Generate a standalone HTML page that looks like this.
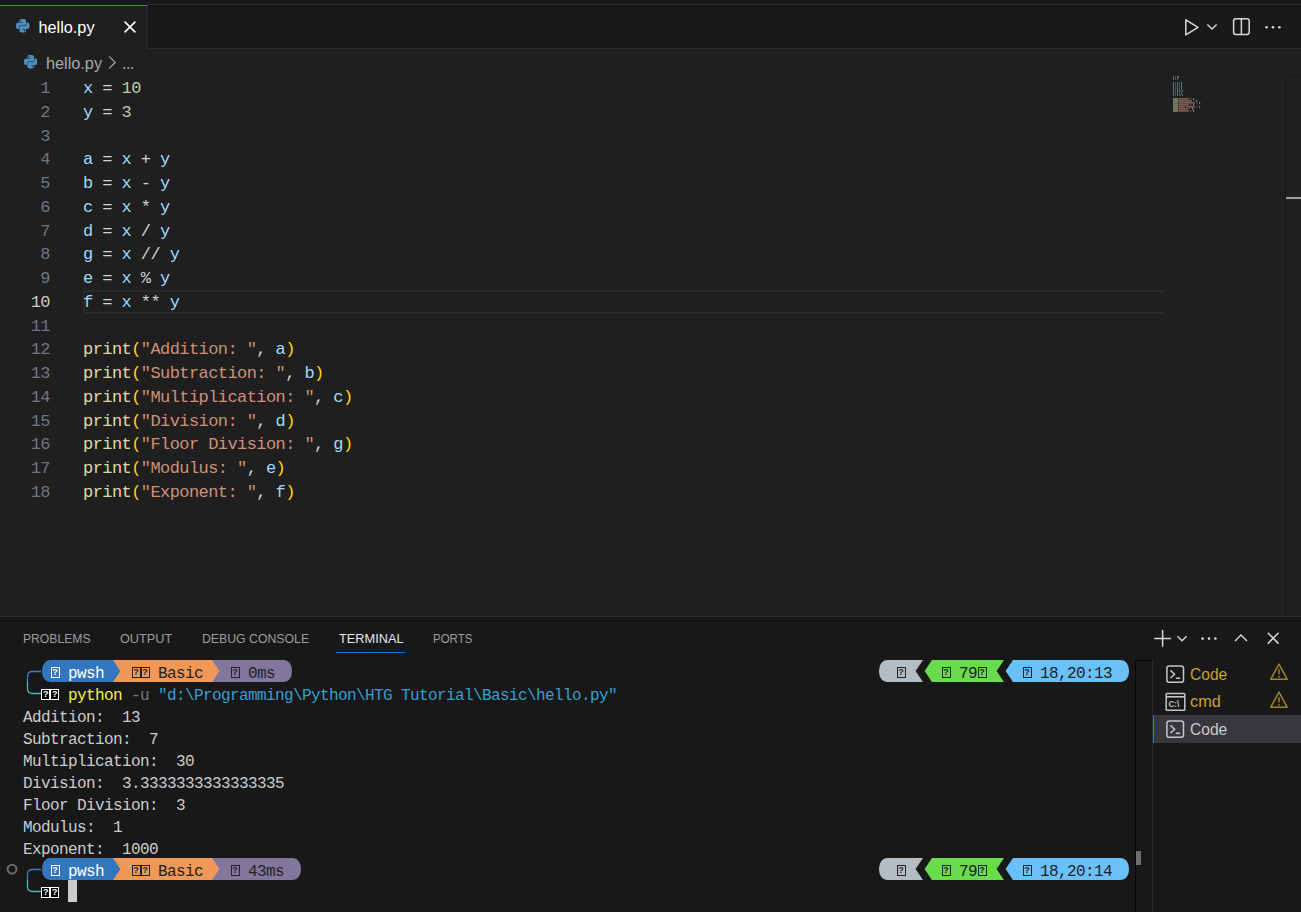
<!DOCTYPE html>
<html lang="en"><head><meta charset="utf-8"><title>hello.py</title><style>
*{box-sizing:border-box}
html,body{margin:0;padding:0}
body{width:1301px;height:912px;overflow:hidden;background:#1f1f1f;position:relative;font-family:"Liberation Sans",sans-serif;color:#ccc}
.abs{position:absolute}
.ui{position:absolute;white-space:pre;font-family:"Liberation Sans",sans-serif;transform-origin:0 50%}
.code{position:absolute;left:83px;white-space:pre;font-family:"Liberation Mono",monospace;font-size:17px;letter-spacing:-0.5765px;line-height:23.75px;height:23.75px;color:#d4d4d4;margin-top:1.2px}
.ln{position:absolute;left:0;width:49.9px;text-align:right;white-space:pre;font-family:"Liberation Mono",monospace;font-size:17px;letter-spacing:-0.5765px;line-height:23.75px;height:23.75px;color:#6e7681;margin-top:1.2px}
.v{color:#9cdcfe}.n{color:#b5cea8}.f{color:#dcdcaa}.p{color:#ffd700}.s{color:#ce9178}
.t{position:absolute;white-space:pre;font-family:"Liberation Mono",monospace;font-size:16px;letter-spacing:-0.6014px;line-height:22px;height:22px;color:#ccc;margin-top:2.6px}
.tf{position:absolute;width:9.2px;height:11.2px;border:1px solid currentColor;font-family:"Liberation Sans",sans-serif;font-size:9px;line-height:9.5px;text-align:center;font-weight:bold}
</style></head><body>
<div class="abs" style="left:0;top:0;width:1301px;height:49px;background:#181818"></div>
<div class="abs" style="left:147px;top:4px;width:1154px;height:1px;background:#2b2b2b"></div>
<div class="abs" style="left:0;top:48px;width:1301px;height:1px;background:#2b2b2b"></div>
<div class="abs" style="left:0;top:5px;width:148px;height:44px;background:#1f1f1f;border-right:1px solid #2b2b2b"></div>
<div class="abs" style="left:0;top:5px;width:147px;height:1px;background:#367dd4"></div>
<svg class="abs" style="left:16px;top:19px" width="13.5" height="13.5" viewBox="0 0 24 24"><path fill="#4f8fbb" d="M14.25.18l.9.2.73.26.59.3.45.32.34.34.25.34.16.33.1.3.04.26.02.2-.01.13V8.5l-.05.63-.13.55-.21.46-.26.38-.3.31-.33.25-.35.19-.35.14-.33.1-.3.07-.26.04-.21.02H8.77l-.69.05-.59.14-.5.22-.41.27-.33.32-.27.35-.2.36-.15.37-.1.35-.07.32-.04.27-.02.21v3.06H3.17l-.21-.03-.28-.07-.32-.12-.35-.18-.36-.26-.36-.36-.35-.46-.32-.59-.28-.73-.21-.88-.14-1.05-.05-1.23.06-1.22.16-1.04.24-.87.32-.71.36-.57.4-.44.42-.33.42-.24.4-.16.36-.1.32-.05.24-.01h.16l.06.01h8.16v-.83H6.18l-.01-2.75-.02-.37.05-.34.11-.31.17-.28.25-.26.31-.23.38-.2.44-.18.51-.15.58-.12.64-.1.71-.06.77-.04.84-.02 1.27.05zm-6.3 1.98l-.23.33-.08.41.08.41.23.34.33.22.41.09.41-.09.33-.22.23-.34.08-.41-.08-.41-.23-.33-.33-.22-.41-.09-.41.09zm13.09 3.95l.28.06.32.12.35.18.36.27.36.35.35.47.32.59.28.73.21.88.14 1.04.05 1.23-.06 1.23-.16 1.04-.24.86-.32.71-.36.57-.4.45-.42.33-.42.24-.4.16-.36.09-.32.05-.24.02-.16-.01h-8.22v.82h5.84l.01 2.76.02.36-.05.34-.11.31-.17.29-.25.25-.31.24-.38.2-.44.17-.51.15-.58.13-.64.09-.71.07-.77.04-.84.01-1.27-.04-1.07-.14-.9-.2-.73-.25-.59-.3-.45-.33-.34-.34-.25-.34-.16-.33-.1-.3-.04-.25-.02-.2.01-.13v-5.34l.05-.64.13-.54.21-.46.26-.38.3-.32.33-.24.35-.2.35-.14.33-.1.3-.06.26-.04.21-.02.13-.01h5.84l.69-.05.59-.14.5-.21.41-.28.33-.32.27-.35.2-.36.15-.36.1-.35.07-.32.04-.28.02-.21V6.07h2.09l.14.01zm-6.47 14.25l-.23.33-.08.41.08.41.23.33.33.23.41.08.41-.08.33-.23.23-.33.08-.41-.08-.41-.23-.33-.33-.23-.41-.08-.41.08z"/></svg>
<div class="ui" style="left:38.5px;top:17px;font-size:16.25px;line-height:20px;color:#fff">hello.py</div>
<svg class="abs" style="left:120px;top:17px" width="20" height="20" viewBox="0 0 20 20"><path d="M4.6 4.6L15.4 15.4M15.4 4.6L4.6 15.4" stroke="#fff" stroke-width="1.5" fill="none"/></svg>
<svg class="abs" style="left:1181px;top:17px" width="20" height="20" viewBox="0 0 20 20"><path d="M4.8 2.8L17 10.3L4.8 17.8Z" stroke="#d8d8d8" stroke-width="1.5" fill="none" stroke-linejoin="round"/></svg>
<svg class="abs" style="left:1202px;top:17px" width="20" height="20" viewBox="0 0 20 20"><path d="M5.4 7.4L10 12L14.6 7.4" stroke="#d8d8d8" stroke-width="1.4" fill="none"/></svg>
<svg class="abs" style="left:1231px;top:17px" width="20" height="20" viewBox="0 0 20 20"><rect x="2.6" y="1.8" width="15.6" height="15.6" rx="2.2" stroke="#d8d8d8" stroke-width="1.5" fill="none"/><path d="M10.4 1.8V17.4" stroke="#d8d8d8" stroke-width="1.5"/></svg>
<svg class="abs" style="left:1263px;top:17px" width="20" height="20" viewBox="0 0 20 20"><circle cx="3.6" cy="10.2" r="1.3" fill="#d8d8d8"/><circle cx="10" cy="10.2" r="1.3" fill="#d8d8d8"/><circle cx="16.4" cy="10.2" r="1.3" fill="#d8d8d8"/></svg>
<svg class="abs" style="left:23.5px;top:55.3px" width="13.5" height="13.5" viewBox="0 0 24 24"><path fill="#4f8fbb" d="M14.25.18l.9.2.73.26.59.3.45.32.34.34.25.34.16.33.1.3.04.26.02.2-.01.13V8.5l-.05.63-.13.55-.21.46-.26.38-.3.31-.33.25-.35.19-.35.14-.33.1-.3.07-.26.04-.21.02H8.77l-.69.05-.59.14-.5.22-.41.27-.33.32-.27.35-.2.36-.15.37-.1.35-.07.32-.04.27-.02.21v3.06H3.17l-.21-.03-.28-.07-.32-.12-.35-.18-.36-.26-.36-.36-.35-.46-.32-.59-.28-.73-.21-.88-.14-1.05-.05-1.23.06-1.22.16-1.04.24-.87.32-.71.36-.57.4-.44.42-.33.42-.24.4-.16.36-.1.32-.05.24-.01h.16l.06.01h8.16v-.83H6.18l-.01-2.75-.02-.37.05-.34.11-.31.17-.28.25-.26.31-.23.38-.2.44-.18.51-.15.58-.12.64-.1.71-.06.77-.04.84-.02 1.27.05zm-6.3 1.98l-.23.33-.08.41.08.41.23.34.33.22.41.09.41-.09.33-.22.23-.34.08-.41-.08-.41-.23-.33-.33-.22-.41-.09-.41.09zm13.09 3.95l.28.06.32.12.35.18.36.27.36.35.35.47.32.59.28.73.21.88.14 1.04.05 1.23-.06 1.23-.16 1.04-.24.86-.32.71-.36.57-.4.45-.42.33-.42.24-.4.16-.36.09-.32.05-.24.02-.16-.01h-8.22v.82h5.84l.01 2.76.02.36-.05.34-.11.31-.17.29-.25.25-.31.24-.38.2-.44.17-.51.15-.58.13-.64.09-.71.07-.77.04-.84.01-1.27-.04-1.07-.14-.9-.2-.73-.25-.59-.3-.45-.33-.34-.34-.25-.34-.16-.33-.1-.3-.04-.25-.02-.2.01-.13v-5.34l.05-.64.13-.54.21-.46.26-.38.3-.32.33-.24.35-.2.35-.14.33-.1.3-.06.26-.04.21-.02.13-.01h5.84l.69-.05.59-.14.5-.21.41-.28.33-.32.27-.35.2-.36.15-.36.1-.35.07-.32.04-.28.02-.21V6.07h2.09l.14.01zm-6.47 14.25l-.23.33-.08.41.08.41.23.33.33.23.41.08.41-.08.33-.23.23-.33.08-.41-.08-.41-.23-.33-.33-.23-.41-.08-.41.08z"/></svg>
<div class="ui" style="left:46px;top:52.5px;font-size:16.25px;line-height:20px;color:#a9a9a9">hello.py</div>
<svg class="abs" style="left:102px;top:52px" width="20" height="20" viewBox="0 0 20 20"><path d="M7.2 4.4L13.2 10.4L7.2 16.4" stroke="#a9a9a9" stroke-width="1.2" fill="none"/></svg>
<div class="ui" style="left:122px;top:52.5px;font-size:16.25px;line-height:20px;color:#a9a9a9;letter-spacing:-0.6px">...</div>
<div class="abs" style="left:83px;top:290px;width:1082px;height:24px;border:2px solid #292929;border-right:none"></div>
<div class="ln" style="top:76.00px">1</div>
<div class="code" style="top:76.00px"><span class="v">x</span> = <span class="n">10</span></div>
<div class="ln" style="top:99.75px">2</div>
<div class="code" style="top:99.75px"><span class="v">y</span> = <span class="n">3</span></div>
<div class="ln" style="top:123.50px">3</div>
<div class="ln" style="top:147.25px">4</div>
<div class="code" style="top:147.25px"><span class="v">a</span> = <span class="v">x</span> + <span class="v">y</span></div>
<div class="ln" style="top:171.00px">5</div>
<div class="code" style="top:171.00px"><span class="v">b</span> = <span class="v">x</span> - <span class="v">y</span></div>
<div class="ln" style="top:194.75px">6</div>
<div class="code" style="top:194.75px"><span class="v">c</span> = <span class="v">x</span> * <span class="v">y</span></div>
<div class="ln" style="top:218.50px">7</div>
<div class="code" style="top:218.50px"><span class="v">d</span> = <span class="v">x</span> / <span class="v">y</span></div>
<div class="ln" style="top:242.25px">8</div>
<div class="code" style="top:242.25px"><span class="v">g</span> = <span class="v">x</span> // <span class="v">y</span></div>
<div class="ln" style="top:266.00px">9</div>
<div class="code" style="top:266.00px"><span class="v">e</span> = <span class="v">x</span> % <span class="v">y</span></div>
<div class="ln" style="top:289.75px;color:#ccc">10</div>
<div class="code" style="top:289.75px"><span class="v">f</span> = <span class="v">x</span> ** <span class="v">y</span></div>
<div class="ln" style="top:313.50px">11</div>
<div class="ln" style="top:337.25px">12</div>
<div class="code" style="top:337.25px"><span class="f">print</span><span class="p">(</span><span class="s">"Addition: "</span>, <span class="v">a</span><span class="p">)</span></div>
<div class="ln" style="top:361.00px">13</div>
<div class="code" style="top:361.00px"><span class="f">print</span><span class="p">(</span><span class="s">"Subtraction: "</span>, <span class="v">b</span><span class="p">)</span></div>
<div class="ln" style="top:384.75px">14</div>
<div class="code" style="top:384.75px"><span class="f">print</span><span class="p">(</span><span class="s">"Multiplication: "</span>, <span class="v">c</span><span class="p">)</span></div>
<div class="ln" style="top:408.50px">15</div>
<div class="code" style="top:408.50px"><span class="f">print</span><span class="p">(</span><span class="s">"Division: "</span>, <span class="v">d</span><span class="p">)</span></div>
<div class="ln" style="top:432.25px">16</div>
<div class="code" style="top:432.25px"><span class="f">print</span><span class="p">(</span><span class="s">"Floor Division: "</span>, <span class="v">g</span><span class="p">)</span></div>
<div class="ln" style="top:456.00px">17</div>
<div class="code" style="top:456.00px"><span class="f">print</span><span class="p">(</span><span class="s">"Modulus: "</span>, <span class="v">e</span><span class="p">)</span></div>
<div class="ln" style="top:479.75px">18</div>
<div class="code" style="top:479.75px"><span class="f">print</span><span class="p">(</span><span class="s">"Exponent: "</span>, <span class="v">f</span><span class="p">)</span></div>
<svg class="abs" style="left:0;top:0" width="1301" height="130" viewBox="0 0 1301 130"><rect x="1173" y="76" width="1" height="1" fill="#9cdcfe" opacity="0.5"/><rect x="1173" y="77" width="1" height="1" fill="#9cdcfe" opacity="0.38"/><rect x="1175" y="76" width="1" height="1" fill="#d4d4d4" opacity="0.3"/><rect x="1175" y="77" width="1" height="1" fill="#d4d4d4" opacity="0.22"/><rect x="1177" y="76" width="1" height="1" fill="#b5cea8" opacity="0.5"/><rect x="1177" y="77" width="1" height="1" fill="#b5cea8" opacity="0.38"/><rect x="1178" y="76" width="1" height="1" fill="#b5cea8" opacity="0.5"/><rect x="1178" y="77" width="1" height="1" fill="#b5cea8" opacity="0.38"/><rect x="1173" y="78" width="1" height="1" fill="#9cdcfe" opacity="0.5"/><rect x="1173" y="79" width="1" height="1" fill="#9cdcfe" opacity="0.38"/><rect x="1175" y="78" width="1" height="1" fill="#d4d4d4" opacity="0.3"/><rect x="1175" y="79" width="1" height="1" fill="#d4d4d4" opacity="0.22"/><rect x="1177" y="78" width="1" height="1" fill="#b5cea8" opacity="0.5"/><rect x="1177" y="79" width="1" height="1" fill="#b5cea8" opacity="0.38"/><rect x="1173" y="82" width="1" height="1" fill="#9cdcfe" opacity="0.5"/><rect x="1173" y="83" width="1" height="1" fill="#9cdcfe" opacity="0.38"/><rect x="1175" y="82" width="1" height="1" fill="#d4d4d4" opacity="0.3"/><rect x="1175" y="83" width="1" height="1" fill="#d4d4d4" opacity="0.22"/><rect x="1177" y="82" width="1" height="1" fill="#9cdcfe" opacity="0.5"/><rect x="1177" y="83" width="1" height="1" fill="#9cdcfe" opacity="0.38"/><rect x="1179" y="82" width="1" height="1" fill="#d4d4d4" opacity="0.3"/><rect x="1179" y="83" width="1" height="1" fill="#d4d4d4" opacity="0.22"/><rect x="1181" y="82" width="1" height="1" fill="#9cdcfe" opacity="0.5"/><rect x="1181" y="83" width="1" height="1" fill="#9cdcfe" opacity="0.38"/><rect x="1173" y="84" width="1" height="1" fill="#9cdcfe" opacity="0.5"/><rect x="1173" y="85" width="1" height="1" fill="#9cdcfe" opacity="0.38"/><rect x="1175" y="84" width="1" height="1" fill="#d4d4d4" opacity="0.3"/><rect x="1175" y="85" width="1" height="1" fill="#d4d4d4" opacity="0.22"/><rect x="1177" y="84" width="1" height="1" fill="#9cdcfe" opacity="0.5"/><rect x="1177" y="85" width="1" height="1" fill="#9cdcfe" opacity="0.38"/><rect x="1179" y="84" width="1" height="1" fill="#d4d4d4" opacity="0.3"/><rect x="1179" y="85" width="1" height="1" fill="#d4d4d4" opacity="0.22"/><rect x="1181" y="84" width="1" height="1" fill="#9cdcfe" opacity="0.5"/><rect x="1181" y="85" width="1" height="1" fill="#9cdcfe" opacity="0.38"/><rect x="1173" y="86" width="1" height="1" fill="#9cdcfe" opacity="0.5"/><rect x="1173" y="87" width="1" height="1" fill="#9cdcfe" opacity="0.38"/><rect x="1175" y="86" width="1" height="1" fill="#d4d4d4" opacity="0.3"/><rect x="1175" y="87" width="1" height="1" fill="#d4d4d4" opacity="0.22"/><rect x="1177" y="86" width="1" height="1" fill="#9cdcfe" opacity="0.5"/><rect x="1177" y="87" width="1" height="1" fill="#9cdcfe" opacity="0.38"/><rect x="1179" y="86" width="1" height="1" fill="#d4d4d4" opacity="0.3"/><rect x="1179" y="87" width="1" height="1" fill="#d4d4d4" opacity="0.22"/><rect x="1181" y="86" width="1" height="1" fill="#9cdcfe" opacity="0.5"/><rect x="1181" y="87" width="1" height="1" fill="#9cdcfe" opacity="0.38"/><rect x="1173" y="88" width="1" height="1" fill="#9cdcfe" opacity="0.5"/><rect x="1173" y="89" width="1" height="1" fill="#9cdcfe" opacity="0.38"/><rect x="1175" y="88" width="1" height="1" fill="#d4d4d4" opacity="0.3"/><rect x="1175" y="89" width="1" height="1" fill="#d4d4d4" opacity="0.22"/><rect x="1177" y="88" width="1" height="1" fill="#9cdcfe" opacity="0.5"/><rect x="1177" y="89" width="1" height="1" fill="#9cdcfe" opacity="0.38"/><rect x="1179" y="88" width="1" height="1" fill="#d4d4d4" opacity="0.3"/><rect x="1179" y="89" width="1" height="1" fill="#d4d4d4" opacity="0.22"/><rect x="1181" y="88" width="1" height="1" fill="#9cdcfe" opacity="0.5"/><rect x="1181" y="89" width="1" height="1" fill="#9cdcfe" opacity="0.38"/><rect x="1173" y="90" width="1" height="1" fill="#9cdcfe" opacity="0.5"/><rect x="1173" y="91" width="1" height="1" fill="#9cdcfe" opacity="0.38"/><rect x="1175" y="90" width="1" height="1" fill="#d4d4d4" opacity="0.3"/><rect x="1175" y="91" width="1" height="1" fill="#d4d4d4" opacity="0.22"/><rect x="1177" y="90" width="1" height="1" fill="#9cdcfe" opacity="0.5"/><rect x="1177" y="91" width="1" height="1" fill="#9cdcfe" opacity="0.38"/><rect x="1179" y="90" width="1" height="1" fill="#d4d4d4" opacity="0.3"/><rect x="1179" y="91" width="1" height="1" fill="#d4d4d4" opacity="0.22"/><rect x="1180" y="90" width="1" height="1" fill="#d4d4d4" opacity="0.3"/><rect x="1180" y="91" width="1" height="1" fill="#d4d4d4" opacity="0.22"/><rect x="1182" y="90" width="1" height="1" fill="#9cdcfe" opacity="0.5"/><rect x="1182" y="91" width="1" height="1" fill="#9cdcfe" opacity="0.38"/><rect x="1173" y="92" width="1" height="1" fill="#9cdcfe" opacity="0.5"/><rect x="1173" y="93" width="1" height="1" fill="#9cdcfe" opacity="0.38"/><rect x="1175" y="92" width="1" height="1" fill="#d4d4d4" opacity="0.3"/><rect x="1175" y="93" width="1" height="1" fill="#d4d4d4" opacity="0.22"/><rect x="1177" y="92" width="1" height="1" fill="#9cdcfe" opacity="0.5"/><rect x="1177" y="93" width="1" height="1" fill="#9cdcfe" opacity="0.38"/><rect x="1179" y="92" width="1" height="1" fill="#d4d4d4" opacity="0.3"/><rect x="1179" y="93" width="1" height="1" fill="#d4d4d4" opacity="0.22"/><rect x="1181" y="92" width="1" height="1" fill="#9cdcfe" opacity="0.5"/><rect x="1181" y="93" width="1" height="1" fill="#9cdcfe" opacity="0.38"/><rect x="1173" y="94" width="1" height="1" fill="#9cdcfe" opacity="0.5"/><rect x="1173" y="95" width="1" height="1" fill="#9cdcfe" opacity="0.38"/><rect x="1175" y="94" width="1" height="1" fill="#d4d4d4" opacity="0.3"/><rect x="1175" y="95" width="1" height="1" fill="#d4d4d4" opacity="0.22"/><rect x="1177" y="94" width="1" height="1" fill="#9cdcfe" opacity="0.5"/><rect x="1177" y="95" width="1" height="1" fill="#9cdcfe" opacity="0.38"/><rect x="1179" y="94" width="1" height="1" fill="#d4d4d4" opacity="0.3"/><rect x="1179" y="95" width="1" height="1" fill="#d4d4d4" opacity="0.22"/><rect x="1180" y="94" width="1" height="1" fill="#d4d4d4" opacity="0.3"/><rect x="1180" y="95" width="1" height="1" fill="#d4d4d4" opacity="0.22"/><rect x="1182" y="94" width="1" height="1" fill="#9cdcfe" opacity="0.5"/><rect x="1182" y="95" width="1" height="1" fill="#9cdcfe" opacity="0.38"/><rect x="1173" y="98" width="5" height="1" fill="#dcdcaa" opacity="0.5"/><rect x="1173" y="99" width="5" height="1" fill="#dcdcaa" opacity="0.38"/><rect x="1178" y="98" width="1" height="1" fill="#8a8a9a" opacity="0.4"/><rect x="1178" y="99" width="1" height="1" fill="#8a8a9a" opacity="0.30"/><rect x="1179" y="98" width="10" height="1" fill="#ce9178" opacity="0.52"/><rect x="1179" y="99" width="10" height="1" fill="#ce9178" opacity="0.39"/><rect x="1190" y="98" width="1" height="1" fill="#ce9178" opacity="0.25"/><rect x="1190" y="99" width="1" height="1" fill="#ce9178" opacity="0.19"/><rect x="1191" y="98" width="1" height="1" fill="#d4d4d4" opacity="0.12"/><rect x="1191" y="99" width="1" height="1" fill="#d4d4d4" opacity="0.09"/><rect x="1193" y="98" width="1" height="1" fill="#9cdcfe" opacity="0.55"/><rect x="1193" y="99" width="1" height="1" fill="#9cdcfe" opacity="0.41"/><rect x="1194" y="98" width="1" height="1" fill="#ffd700" opacity="0.12"/><rect x="1194" y="99" width="1" height="1" fill="#ffd700" opacity="0.09"/><rect x="1173" y="100" width="5" height="1" fill="#dcdcaa" opacity="0.5"/><rect x="1173" y="101" width="5" height="1" fill="#dcdcaa" opacity="0.38"/><rect x="1178" y="100" width="1" height="1" fill="#8a8a9a" opacity="0.4"/><rect x="1178" y="101" width="1" height="1" fill="#8a8a9a" opacity="0.30"/><rect x="1179" y="100" width="13" height="1" fill="#ce9178" opacity="0.52"/><rect x="1179" y="101" width="13" height="1" fill="#ce9178" opacity="0.39"/><rect x="1193" y="100" width="1" height="1" fill="#ce9178" opacity="0.25"/><rect x="1193" y="101" width="1" height="1" fill="#ce9178" opacity="0.19"/><rect x="1194" y="100" width="1" height="1" fill="#d4d4d4" opacity="0.12"/><rect x="1194" y="101" width="1" height="1" fill="#d4d4d4" opacity="0.09"/><rect x="1196" y="100" width="1" height="1" fill="#9cdcfe" opacity="0.55"/><rect x="1196" y="101" width="1" height="1" fill="#9cdcfe" opacity="0.41"/><rect x="1197" y="100" width="1" height="1" fill="#ffd700" opacity="0.12"/><rect x="1197" y="101" width="1" height="1" fill="#ffd700" opacity="0.09"/><rect x="1173" y="102" width="5" height="1" fill="#dcdcaa" opacity="0.5"/><rect x="1173" y="103" width="5" height="1" fill="#dcdcaa" opacity="0.38"/><rect x="1178" y="102" width="1" height="1" fill="#8a8a9a" opacity="0.4"/><rect x="1178" y="103" width="1" height="1" fill="#8a8a9a" opacity="0.30"/><rect x="1179" y="102" width="16" height="1" fill="#ce9178" opacity="0.52"/><rect x="1179" y="103" width="16" height="1" fill="#ce9178" opacity="0.39"/><rect x="1196" y="102" width="1" height="1" fill="#ce9178" opacity="0.25"/><rect x="1196" y="103" width="1" height="1" fill="#ce9178" opacity="0.19"/><rect x="1197" y="102" width="1" height="1" fill="#d4d4d4" opacity="0.12"/><rect x="1197" y="103" width="1" height="1" fill="#d4d4d4" opacity="0.09"/><rect x="1199" y="102" width="1" height="1" fill="#9cdcfe" opacity="0.55"/><rect x="1199" y="103" width="1" height="1" fill="#9cdcfe" opacity="0.41"/><rect x="1200" y="102" width="1" height="1" fill="#ffd700" opacity="0.12"/><rect x="1200" y="103" width="1" height="1" fill="#ffd700" opacity="0.09"/><rect x="1173" y="104" width="5" height="1" fill="#dcdcaa" opacity="0.5"/><rect x="1173" y="105" width="5" height="1" fill="#dcdcaa" opacity="0.38"/><rect x="1178" y="104" width="1" height="1" fill="#8a8a9a" opacity="0.4"/><rect x="1178" y="105" width="1" height="1" fill="#8a8a9a" opacity="0.30"/><rect x="1179" y="104" width="10" height="1" fill="#ce9178" opacity="0.52"/><rect x="1179" y="105" width="10" height="1" fill="#ce9178" opacity="0.39"/><rect x="1190" y="104" width="1" height="1" fill="#ce9178" opacity="0.25"/><rect x="1190" y="105" width="1" height="1" fill="#ce9178" opacity="0.19"/><rect x="1191" y="104" width="1" height="1" fill="#d4d4d4" opacity="0.12"/><rect x="1191" y="105" width="1" height="1" fill="#d4d4d4" opacity="0.09"/><rect x="1193" y="104" width="1" height="1" fill="#9cdcfe" opacity="0.55"/><rect x="1193" y="105" width="1" height="1" fill="#9cdcfe" opacity="0.41"/><rect x="1194" y="104" width="1" height="1" fill="#ffd700" opacity="0.12"/><rect x="1194" y="105" width="1" height="1" fill="#ffd700" opacity="0.09"/><rect x="1173" y="106" width="5" height="1" fill="#dcdcaa" opacity="0.5"/><rect x="1173" y="107" width="5" height="1" fill="#dcdcaa" opacity="0.38"/><rect x="1178" y="106" width="1" height="1" fill="#8a8a9a" opacity="0.4"/><rect x="1178" y="107" width="1" height="1" fill="#8a8a9a" opacity="0.30"/><rect x="1179" y="106" width="6" height="1" fill="#ce9178" opacity="0.52"/><rect x="1179" y="107" width="6" height="1" fill="#ce9178" opacity="0.39"/><rect x="1186" y="106" width="9" height="1" fill="#ce9178" opacity="0.52"/><rect x="1186" y="107" width="9" height="1" fill="#ce9178" opacity="0.39"/><rect x="1196" y="106" width="1" height="1" fill="#ce9178" opacity="0.25"/><rect x="1196" y="107" width="1" height="1" fill="#ce9178" opacity="0.19"/><rect x="1197" y="106" width="1" height="1" fill="#d4d4d4" opacity="0.12"/><rect x="1197" y="107" width="1" height="1" fill="#d4d4d4" opacity="0.09"/><rect x="1199" y="106" width="1" height="1" fill="#9cdcfe" opacity="0.55"/><rect x="1199" y="107" width="1" height="1" fill="#9cdcfe" opacity="0.41"/><rect x="1200" y="106" width="1" height="1" fill="#ffd700" opacity="0.12"/><rect x="1200" y="107" width="1" height="1" fill="#ffd700" opacity="0.09"/><rect x="1173" y="108" width="5" height="1" fill="#dcdcaa" opacity="0.5"/><rect x="1173" y="109" width="5" height="1" fill="#dcdcaa" opacity="0.38"/><rect x="1178" y="108" width="1" height="1" fill="#8a8a9a" opacity="0.4"/><rect x="1178" y="109" width="1" height="1" fill="#8a8a9a" opacity="0.30"/><rect x="1179" y="108" width="9" height="1" fill="#ce9178" opacity="0.52"/><rect x="1179" y="109" width="9" height="1" fill="#ce9178" opacity="0.39"/><rect x="1189" y="108" width="1" height="1" fill="#ce9178" opacity="0.25"/><rect x="1189" y="109" width="1" height="1" fill="#ce9178" opacity="0.19"/><rect x="1190" y="108" width="1" height="1" fill="#d4d4d4" opacity="0.12"/><rect x="1190" y="109" width="1" height="1" fill="#d4d4d4" opacity="0.09"/><rect x="1192" y="108" width="1" height="1" fill="#9cdcfe" opacity="0.55"/><rect x="1192" y="109" width="1" height="1" fill="#9cdcfe" opacity="0.41"/><rect x="1193" y="108" width="1" height="1" fill="#ffd700" opacity="0.12"/><rect x="1193" y="109" width="1" height="1" fill="#ffd700" opacity="0.09"/><rect x="1173" y="110" width="5" height="1" fill="#dcdcaa" opacity="0.5"/><rect x="1173" y="111" width="5" height="1" fill="#dcdcaa" opacity="0.38"/><rect x="1178" y="110" width="1" height="1" fill="#8a8a9a" opacity="0.4"/><rect x="1178" y="111" width="1" height="1" fill="#8a8a9a" opacity="0.30"/><rect x="1179" y="110" width="10" height="1" fill="#ce9178" opacity="0.52"/><rect x="1179" y="111" width="10" height="1" fill="#ce9178" opacity="0.39"/><rect x="1190" y="110" width="1" height="1" fill="#ce9178" opacity="0.25"/><rect x="1190" y="111" width="1" height="1" fill="#ce9178" opacity="0.19"/><rect x="1191" y="110" width="1" height="1" fill="#d4d4d4" opacity="0.12"/><rect x="1191" y="111" width="1" height="1" fill="#d4d4d4" opacity="0.09"/><rect x="1193" y="110" width="1" height="1" fill="#9cdcfe" opacity="0.55"/><rect x="1193" y="111" width="1" height="1" fill="#9cdcfe" opacity="0.41"/><rect x="1194" y="110" width="1" height="1" fill="#ffd700" opacity="0.12"/><rect x="1194" y="111" width="1" height="1" fill="#ffd700" opacity="0.09"/></svg>
<div class="abs" style="left:1285px;top:76px;width:16px;height:540px;border-left:1px solid #161616;border-top:1px solid #161616"></div>
<div class="abs" style="left:1286px;top:197px;width:15px;height:2px;background:#a0a0a0"></div>
<div class="abs" style="left:0;top:616px;width:1301px;height:296px;background:#181818;border-top:1px solid #2b2b2b"></div>
<div class="ui" style="left:23.4px;top:629.2px;font-size:13.4px;line-height:20px;color:#9d9d9d;transform:scaleX(0.907)">PROBLEMS</div>
<div class="ui" style="left:120.0px;top:629.2px;font-size:13.4px;line-height:20px;color:#9d9d9d;transform:scaleX(0.948)">OUTPUT</div>
<div class="ui" style="left:201.6px;top:629.2px;font-size:13.4px;line-height:20px;color:#9d9d9d;transform:scaleX(0.917)">DEBUG CONSOLE</div>
<div class="ui" style="left:338.8px;top:629.2px;font-size:13.4px;line-height:20px;color:#e7e7e7;transform:scaleX(0.953)">TERMINAL</div>
<div class="ui" style="left:432.8px;top:629.2px;font-size:13.4px;line-height:20px;color:#9d9d9d;transform:scaleX(0.857)">PORTS</div>
<div class="abs" style="left:336px;top:652px;width:69px;height:1px;background:#0078d4"></div>
<svg class="abs" style="left:1152px;top:628px" width="20" height="20" viewBox="0 0 20 20"><path d="M2.2 10.4H19M10.6 2V18.8" stroke="#d8d8d8" stroke-width="1.5" fill="none"/></svg>
<svg class="abs" style="left:1172px;top:628px" width="20" height="20" viewBox="0 0 20 20"><path d="M5.4 8.2L10 12.8L14.6 8.2" stroke="#d8d8d8" stroke-width="1.4" fill="none"/></svg>
<svg class="abs" style="left:1199px;top:628px" width="20" height="20" viewBox="0 0 20 20"><circle cx="3.6" cy="10.6" r="1.3" fill="#d8d8d8"/><circle cx="10" cy="10.6" r="1.3" fill="#d8d8d8"/><circle cx="16.4" cy="10.6" r="1.3" fill="#d8d8d8"/></svg>
<svg class="abs" style="left:1231px;top:628px" width="20" height="20" viewBox="0 0 20 20"><path d="M4 13L10 7L16 13" stroke="#d8d8d8" stroke-width="1.4" fill="none"/></svg>
<svg class="abs" style="left:1263px;top:628px" width="20" height="20" viewBox="0 0 20 20"><path d="M4.8 4.8L15.6 15.6M15.6 4.8L4.8 15.6" stroke="#d8d8d8" stroke-width="1.5" fill="none"/></svg>
<div class="abs" style="left:1135px;top:660px;width:17px;height:252px;border-left:1px solid #050510;border-top:1px solid #050510"></div>
<div class="abs" style="left:1152px;top:660px;width:1px;height:252px;background:#2b2b2b"></div>
<div class="abs" style="left:1136px;top:851px;width:5px;height:14px;background:#6f6f6f"></div>
<div class="abs" style="left:1153px;top:715px;width:148px;height:27.5px;background:#37373d"></div>
<div class="abs" style="left:1153px;top:715px;width:1px;height:27.5px;background:#3b78c9"></div>
<svg class="abs" style="left:1165px;top:663.5px" width="20" height="20" viewBox="0 0 20 20"><rect x="1.9" y="1.9" width="16.6" height="16.4" rx="2.4" stroke="#c5c5c5" stroke-width="1.5" fill="none"/><path d="M5.4 6.4L9.6 10.2L5.4 14M10.8 14.2H15.2" stroke="#c5c5c5" stroke-width="1.5" fill="none"/></svg>
<div class="ui" style="left:1190px;top:663.7px;font-size:16.25px;line-height:20px;color:#c5a332;transform:scaleX(0.96)">Code</div>
<svg class="abs" style="left:1269px;top:662px" width="20" height="20" viewBox="0 0 20 20"><path d="M10 2.2L18.2 17.2H1.8Z" stroke="#9c8329" stroke-width="1.5" fill="none" stroke-linejoin="round"/><path d="M10 7.2V12.6" stroke="#9c8329" stroke-width="1.5"/><circle cx="10" cy="14.8" r="0.9" fill="#9c8329"/></svg>
<svg class="abs" style="left:1164.5px;top:692px" width="21" height="20" viewBox="0 0 21 20"><rect x="1.2" y="1.6" width="18.6" height="16.6" rx="0.8" stroke="#c5c5c5" stroke-width="1.5" fill="none"/><path d="M1.2 4.8H19.8" stroke="#c5c5c5" stroke-width="1.6"/><text x="3.4" y="14.6" font-family="Liberation Sans, sans-serif" font-weight="bold" font-size="8.2" fill="#c5c5c5">C:\</text></svg>
<div class="ui" style="left:1190px;top:691.2px;font-size:16.25px;line-height:20px;color:#c5a332">cmd</div>
<svg class="abs" style="left:1269px;top:689.5px" width="20" height="20" viewBox="0 0 20 20"><path d="M10 2.2L18.2 17.2H1.8Z" stroke="#9c8329" stroke-width="1.5" fill="none" stroke-linejoin="round"/><path d="M10 7.2V12.6" stroke="#9c8329" stroke-width="1.5"/><circle cx="10" cy="14.8" r="0.9" fill="#9c8329"/></svg>
<svg class="abs" style="left:1165px;top:718.5px" width="20" height="20" viewBox="0 0 20 20"><rect x="1.9" y="1.9" width="16.6" height="16.4" rx="2.4" stroke="#c5c5c5" stroke-width="1.5" fill="none"/><path d="M5.4 6.4L9.6 10.2L5.4 14M10.8 14.2H15.2" stroke="#c5c5c5" stroke-width="1.5" fill="none"/></svg>
<div class="ui" style="left:1190px;top:718.7px;font-size:16.25px;line-height:20px;color:#ccc;transform:scaleX(0.96)">Code</div>
<svg class="abs" style="left:23px;top:660px" width="18" height="44" viewBox="0 0 18 44"><path d="M18 11.5H9.5Q4.5 11.5 4.5 16.5V22" stroke="#3880c4" stroke-width="1.3" fill="none"/><path d="M4.5 22V28.5Q4.5 33.5 9.5 33.5H18" stroke="#4bb9be" stroke-width="1.3" fill="none"/></svg>
<div class="abs" style="left:41.8px;top:660px;width:8.4px;height:22px;background:#3476be;border-radius:8.4px 0 0 8.4px / 11px 0 0 11px"></div>
<div class="abs" style="left:50px;top:660px;width:63px;height:22px;background:#3476be"></div>
<div class="tf" style="left:50.5px;top:666.8px;color:#fff">?</div>
<div class="t" style="left:68px;top:660px;color:#fff">pwsh</div>
<svg class="abs" style="left:113px;top:660px" width="9" height="22" viewBox="0 0 9 22"><rect width="9" height="22" fill="#ef9858"/><path d="M0 0L7.4 11L0 22Z" fill="#3476be"/></svg>
<div class="abs" style="left:122px;top:660px;width:90px;height:22px;background:#ef9858"></div>
<div class="tf" style="left:131.5px;top:666.8px;color:#222226">?</div>
<div class="tf" style="left:140.5px;top:666.8px;color:#222226">?</div>
<div class="t" style="left:158px;top:660px;color:#222226">Basic</div>
<svg class="abs" style="left:212px;top:660px" width="9" height="22" viewBox="0 0 9 22"><rect width="9" height="22" fill="#83769c"/><path d="M0 0L7.4 11L0 22Z" fill="#ef9858"/></svg>
<div class="abs" style="left:221px;top:660px;width:63px;height:22px;background:#83769c"></div>
<div class="tf" style="left:230.5px;top:666.8px;color:#222226">?</div>
<div class="t" style="left:248px;top:660px;color:#222226">0ms</div>
<div class="abs" style="left:283.5px;top:660px;width:8.5px;height:22px;background:#83769c;border-radius:0 8.5px 8.5px 0 / 0 11px 11px 0"></div>
<div class="abs" style="left:878.8px;top:660px;width:8.4px;height:22px;background:#b4bcc4;border-radius:8.4px 0 0 8.4px / 11px 0 0 11px"></div>
<div class="abs" style="left:887px;top:660px;width:27px;height:22px;background:#b4bcc4"></div>
<div class="tf" style="left:896.5px;top:666.8px;color:#222226">?</div>
<svg class="abs" style="left:914px;top:660px" width="9" height="22" viewBox="0 0 9 22"><rect width="9" height="22" fill="#b4bcc4"/><path d="M9 0L1.6 11L9 22Z" fill="#181818"/></svg>
<svg class="abs" style="left:923px;top:660px" width="9" height="22" viewBox="0 0 9 22"><rect width="9" height="22" fill="#181818"/><path d="M9 0L1.6 11L9 22Z" fill="#6bdb4e"/></svg>
<div class="abs" style="left:932px;top:660px;width:63px;height:22px;background:#6bdb4e"></div>
<div class="tf" style="left:941.5px;top:666.8px;color:#222226">?</div>
<div class="t" style="left:959px;top:660px;color:#222226">79</div>
<div class="tf" style="left:977.5px;top:666.8px;color:#222226">?</div>
<svg class="abs" style="left:995px;top:660px" width="9" height="22" viewBox="0 0 9 22"><rect width="9" height="22" fill="#6bdb4e"/><path d="M9 0L1.6 11L9 22Z" fill="#181818"/></svg>
<svg class="abs" style="left:1004px;top:660px" width="9" height="22" viewBox="0 0 9 22"><rect width="9" height="22" fill="#181818"/><path d="M9 0L1.6 11L9 22Z" fill="#6ac1f8"/></svg>
<div class="abs" style="left:1013px;top:660px;width:108px;height:22px;background:#6ac1f8"></div>
<div class="tf" style="left:1022.5px;top:666.8px;color:#222226">?</div>
<div class="t" style="left:1040px;top:660px;color:#222226">18,20:13</div>
<div class="abs" style="left:1120.5px;top:660px;width:8.5px;height:22px;background:#6ac1f8;border-radius:0 8.5px 8.5px 0 / 0 11px 11px 0"></div>
<div class="tf" style="left:41.1px;top:688.8px;width:9.3px;height:11.2px;color:#fff;border-width:1.5px;background:#000;line-height:8.4px">?</div>
<div class="tf" style="left:50.1px;top:688.8px;width:9.3px;height:11.2px;color:#fff;border-width:1.5px;background:#000;line-height:8.4px">?</div>
<div class="t" style="left:68px;top:682px"><span style="color:#f0f04c">python</span> <span style="color:#7a7a7a">-u</span> <span style="color:#359fd0">"d:\Programming\Python\HTG Tutorial\Basic\hello.py"</span></div>
<div class="t" style="left:23px;top:704px;color:#ccc">Addition:  13</div>
<div class="t" style="left:23px;top:726px;color:#ccc">Subtraction:  7</div>
<div class="t" style="left:23px;top:748px;color:#ccc">Multiplication:  30</div>
<div class="t" style="left:23px;top:770px;color:#ccc">Division:  3.3333333333333335</div>
<div class="t" style="left:23px;top:792px;color:#ccc">Floor Division:  3</div>
<div class="t" style="left:23px;top:814px;color:#ccc">Modulus:  1</div>
<div class="t" style="left:23px;top:836px;color:#ccc">Exponent:  1000</div>
<svg class="abs" style="left:23px;top:858px" width="18" height="44" viewBox="0 0 18 44"><path d="M18 11.5H9.5Q4.5 11.5 4.5 16.5V22" stroke="#3880c4" stroke-width="1.3" fill="none"/><path d="M4.5 22V28.5Q4.5 33.5 9.5 33.5H18" stroke="#4bb9be" stroke-width="1.3" fill="none"/></svg>
<div class="abs" style="left:41.8px;top:858px;width:8.4px;height:22px;background:#3476be;border-radius:8.4px 0 0 8.4px / 11px 0 0 11px"></div>
<div class="abs" style="left:50px;top:858px;width:63px;height:22px;background:#3476be"></div>
<div class="tf" style="left:50.5px;top:864.8px;color:#fff">?</div>
<div class="t" style="left:68px;top:858px;color:#fff">pwsh</div>
<svg class="abs" style="left:113px;top:858px" width="9" height="22" viewBox="0 0 9 22"><rect width="9" height="22" fill="#ef9858"/><path d="M0 0L7.4 11L0 22Z" fill="#3476be"/></svg>
<div class="abs" style="left:122px;top:858px;width:90px;height:22px;background:#ef9858"></div>
<div class="tf" style="left:131.5px;top:864.8px;color:#222226">?</div>
<div class="tf" style="left:140.5px;top:864.8px;color:#222226">?</div>
<div class="t" style="left:158px;top:858px;color:#222226">Basic</div>
<svg class="abs" style="left:212px;top:858px" width="9" height="22" viewBox="0 0 9 22"><rect width="9" height="22" fill="#83769c"/><path d="M0 0L7.4 11L0 22Z" fill="#ef9858"/></svg>
<div class="abs" style="left:221px;top:858px;width:72px;height:22px;background:#83769c"></div>
<div class="tf" style="left:230.5px;top:864.8px;color:#222226">?</div>
<div class="t" style="left:248px;top:858px;color:#222226">43ms</div>
<div class="abs" style="left:292.5px;top:858px;width:8.5px;height:22px;background:#83769c;border-radius:0 8.5px 8.5px 0 / 0 11px 11px 0"></div>
<div class="abs" style="left:878.8px;top:858px;width:8.4px;height:22px;background:#b4bcc4;border-radius:8.4px 0 0 8.4px / 11px 0 0 11px"></div>
<div class="abs" style="left:887px;top:858px;width:27px;height:22px;background:#b4bcc4"></div>
<div class="tf" style="left:896.5px;top:864.8px;color:#222226">?</div>
<svg class="abs" style="left:914px;top:858px" width="9" height="22" viewBox="0 0 9 22"><rect width="9" height="22" fill="#b4bcc4"/><path d="M9 0L1.6 11L9 22Z" fill="#181818"/></svg>
<svg class="abs" style="left:923px;top:858px" width="9" height="22" viewBox="0 0 9 22"><rect width="9" height="22" fill="#181818"/><path d="M9 0L1.6 11L9 22Z" fill="#6bdb4e"/></svg>
<div class="abs" style="left:932px;top:858px;width:63px;height:22px;background:#6bdb4e"></div>
<div class="tf" style="left:941.5px;top:864.8px;color:#222226">?</div>
<div class="t" style="left:959px;top:858px;color:#222226">79</div>
<div class="tf" style="left:977.5px;top:864.8px;color:#222226">?</div>
<svg class="abs" style="left:995px;top:858px" width="9" height="22" viewBox="0 0 9 22"><rect width="9" height="22" fill="#6bdb4e"/><path d="M9 0L1.6 11L9 22Z" fill="#181818"/></svg>
<svg class="abs" style="left:1004px;top:858px" width="9" height="22" viewBox="0 0 9 22"><rect width="9" height="22" fill="#181818"/><path d="M9 0L1.6 11L9 22Z" fill="#6ac1f8"/></svg>
<div class="abs" style="left:1013px;top:858px;width:108px;height:22px;background:#6ac1f8"></div>
<div class="tf" style="left:1022.5px;top:864.8px;color:#222226">?</div>
<div class="t" style="left:1040px;top:858px;color:#222226">18,20:14</div>
<div class="abs" style="left:1120.5px;top:858px;width:8.5px;height:22px;background:#6ac1f8;border-radius:0 8.5px 8.5px 0 / 0 11px 11px 0"></div>
<div class="tf" style="left:41.1px;top:886.8px;width:9.3px;height:11.2px;color:#fff;border-width:1.5px;background:#000;line-height:8.4px">?</div>
<div class="tf" style="left:50.1px;top:886.8px;width:9.3px;height:11.2px;color:#fff;border-width:1.5px;background:#000;line-height:8.4px">?</div>
<div class="abs" style="left:68px;top:880px;width:9px;height:22px;background:#ccc"></div>
<svg class="abs" style="left:5px;top:862px" width="14" height="14" viewBox="0 0 14 14"><circle cx="7.05" cy="7.2" r="4.45" stroke="#686868" stroke-width="2.1" fill="none"/></svg>
</body></html>
